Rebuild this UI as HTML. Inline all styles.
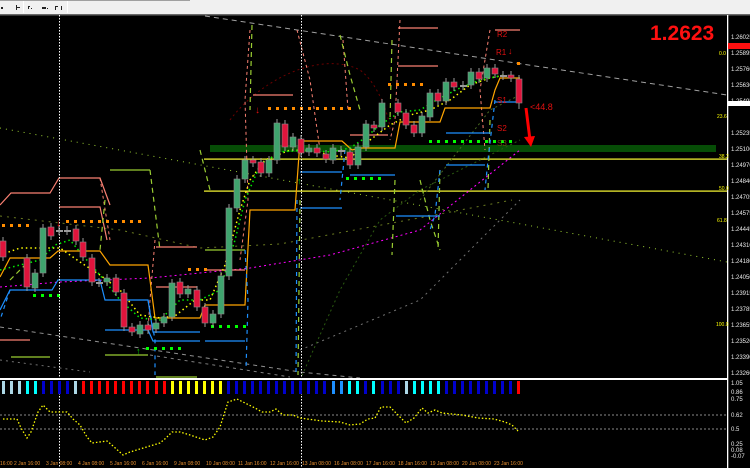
<!DOCTYPE html>
<html><head><meta charset="utf-8"><style>
html,body{margin:0;padding:0;background:#000;width:750px;height:468px;overflow:hidden}
svg{display:block}
text{font-family:"Liberation Sans",sans-serif}
</style></head><body>
<svg width="750" height="468" viewBox="0 0 750 468" xmlns="http://www.w3.org/2000/svg">
<rect x="0" y="0" width="750" height="468" fill="#000"/>
<!-- toolbar -->
<rect x="0" y="0" width="750" height="14" fill="#f0f0f0"/>
<rect x="0" y="0" width="190" height="1" fill="#a0a0a0"/>
<rect x="0" y="14" width="750" height="1.5" fill="#6a6a6a"/>
<rect x="23" y="1" width="1" height="12" fill="#fff"/>
<rect x="67" y="1" width="1" height="12" fill="#fff"/>
<g fill="#222"><rect x="1" y="7" width="2" height="2"/><rect x="16" y="5" width="1" height="5"/><rect x="16" y="7" width="4" height="1"/>
<rect x="28" y="6" width="1" height="3"/><rect x="28" y="6" width="2" height="1"/><rect x="31" y="8" width="1" height="1"/>
<rect x="42" y="7" width="4" height="2"/><rect x="47" y="8" width="1" height="1"/><rect x="55" y="6" width="1" height="4"/><rect x="55" y="6" width="3" height="1"/><rect x="61" y="6" width="1" height="4"/></g>

<!-- green band -->
<rect x="210" y="145" width="506" height="7" fill="#064d06"/>
<!-- yellow horizontals -->
<rect x="204" y="158.5" width="523" height="1.2" fill="#ffff33"/>
<rect x="204" y="190.5" width="523" height="1.2" fill="#ffff33"/>

<!-- trend lines -->
<g fill="none" stroke-width="1">
<path d="M205,16 L727,95" stroke="#a0a0a0" stroke-dasharray="5,4"/>
<path d="M0,327 L300,372 L360,378" stroke="#909090" stroke-dasharray="4,4"/>
<path d="M150,355 L290,377" stroke="#808080" stroke-dasharray="3,4"/>
<path d="M0,128 L727,262" stroke="#9acd32" stroke-dasharray="1,5"/>
<path d="M0,216 L120,230 L200,248 L280,244 L440,214 L512,200" stroke="#6a7a20" stroke-dasharray="2,5"/>
<path d="M0,287 L60,282 L150,278 L250,268 L330,255 L420,230 L520,150" stroke="#ff00ff" stroke-dasharray="2,3"/>
<path d="M0,360 L90,372 M300,350 L420,300 L520,200" stroke="#707070" stroke-dasharray="2,4"/>
<path d="M300,380 L340,290 L380,220 L420,190 L520,140" stroke="#2a5a10" stroke-dasharray="2,3"/>
<path d="M230,120 C260,80 320,50 360,70 C380,85 390,120 390,130" stroke="#6a0000" stroke-dasharray="2,3"/>
<path d="M420,200 L490,110 L520,95" stroke="#4a6a20" stroke-dasharray="2,3"/>
</g>

<!-- salmon pivot lines -->
<g stroke="#fa8072" stroke-width="1.2" fill="none">
<path d="M0,205 L11,193 L50,193 L59,178 L100,178 L110,205"/>
<path d="M59,207 L100,207 L107,240"/>
<path d="M156,247 L197,247"/>
<path d="M156,287 L197,287"/>
<path d="M205,270 L245,270"/>
<path d="M253,95 L293,95"/>
<path d="M398,28 L438,28"/>
<path d="M398,66 L438,66"/>
<path d="M350,135 L388,135"/>
<path d="M495,30 L520,30"/>
<path d="M0,340 L30,340"/>
</g>
<g stroke="#fa8072" stroke-width="1" fill="none" stroke-dasharray="3,3">
<path d="M250,30 L245,100 L248,200 L240,260"/>
<path d="M297,30 L310,80 L320,150"/>
<path d="M343,40 L348,110"/>
<path d="M400,20 L395,120 L390,140"/>
<path d="M490,30 L480,90 L485,150"/>
<path d="M155,240 L150,300 L148,330"/>
<path d="M100,178 L110,240"/>
</g>
<!-- lime dashed zigzags -->
<g stroke="#9acd32" stroke-width="1.2" fill="none" stroke-dasharray="5,4">
<path d="M252,25 L250,110"/>
<path d="M300,200 L298,375"/>
<path d="M340,35 L350,75 L360,110"/>
<path d="M392,40 L390,120"/>
<path d="M420,180 L430,220 L440,250"/>
<path d="M395,180 L392,255"/>
<path d="M440,170 L438,250"/>
<path d="M490,120 L488,190"/>
<path d="M105,200 L100,250"/>
<path d="M150,170 L160,250"/>
<path d="M10,280 L30,260 M200,150 L210,190"/>
</g>
<g stroke="#9acd32" stroke-width="1.2" fill="none">
<path d="M110,170 L150,170"/>
<path d="M11,357 L50,357 M105,355 L148,355 M156,377 L197,377"/>
<path d="M205,250 L245,250"/>
</g>

<!-- orange step line -->
<path d="M0,277 L10,258 L50,258 L58,251 L100,251 L110,265 L148,265 L155,318 L200,318 L205,305 L245,305 L250,210 L295,210 L300,141 L342,141 L352,150 L360,148 L395,148 L400,122 L440,122 L445,108 L490,108 L495,90 L500,78 L520,78" fill="none" stroke="#ffa500" stroke-width="1.2"/>
<!-- blue step lines -->
<g fill="none" stroke="#1e90ff" stroke-width="1.2">
<path d="M0,310 L10,290 L52,290 L58,280 L100,280 L105,300 L148,300 L153,332 L200,332"/>
<path d="M105,330 L148,330 L153,341 L200,341"/>
<path d="M300,172 L342,172"/>
<path d="M300,208 L342,208"/>
<path d="M350,175 L395,175"/>
<path d="M396,216 L440,216"/>
<path d="M446,133 L490,133"/>
<path d="M446,165 L485,165"/>
<path d="M495,102 L520,102"/>
<path d="M205,341 L245,341"/>
</g>
<g fill="none" stroke="#1e90ff" stroke-width="1.2" stroke-dasharray="4,4">
<path d="M148,300 L155,340 L155,375"/>
<path d="M245,250 L248,300 L246,370"/>
<path d="M297,200 L296,375"/>
<path d="M345,150 L340,200"/>
<path d="M440,170 L435,215 L430,230"/>
<path d="M495,100 L488,160 L485,190"/>
<path d="M10,290 L0,320"/>
</g>

<!-- yellow and green dotted MAs -->
<path d="M0,255 L20,248 L40,248 L60,248 L80,262 L100,275 L120,290 L140,315 L160,318 L175,316 L195,300 L210,300 L225,265 L240,210 L250,180 L265,160 L290,150 L315,151 L330,155 L350,158 L370,140 L390,125 L410,115 L430,110 L450,100 L470,85 L490,78 L505,75" fill="none" stroke="#ffff00" stroke-width="1.5" stroke-dasharray="1.5,3"/>
<path d="M0,270 L20,265 L40,260 L55,245 L70,240 L85,258 L100,275 L120,300 L140,318 L160,320 L180,300 L200,300 L220,290 L235,240 L245,200 L260,165 L280,152 L305,150 L330,152 L350,148 L365,138 L380,125 L400,112 L420,110 L440,98 L460,88 L480,80 L505,75" fill="none" stroke="#00ee00" stroke-width="1.5" stroke-dasharray="1.5,3"/>

<!-- dot rows -->
<g fill="#ff8c00">
<rect x="2" y="224" width="3" height="3"/><rect x="10" y="224" width="3" height="3"/><rect x="18" y="224" width="3" height="3"/><rect x="26" y="224" width="3" height="3"/>
<rect x="66" y="220" width="3" height="3"/><rect x="74" y="220" width="3" height="3"/><rect x="82" y="220" width="3" height="3"/><rect x="90" y="220" width="3" height="3"/><rect x="98" y="220" width="3" height="3"/><rect x="106" y="220" width="3" height="3"/><rect x="114" y="220" width="3" height="3"/><rect x="122" y="220" width="3" height="3"/><rect x="130" y="220" width="3" height="3"/><rect x="138" y="220" width="3" height="3"/>
<rect x="188" y="268" width="3" height="3"/><rect x="196" y="268" width="3" height="3"/><rect x="204" y="268" width="3" height="3"/>
<rect x="268" y="107" width="3" height="3"/><rect x="276" y="107" width="3" height="3"/><rect x="284" y="107" width="3" height="3"/><rect x="292" y="107" width="3" height="3"/><rect x="300" y="107" width="3" height="3"/><rect x="308" y="107" width="3" height="3"/><rect x="316" y="107" width="3" height="3"/><rect x="324" y="107" width="3" height="3"/><rect x="332" y="107" width="3" height="3"/><rect x="340" y="107" width="3" height="3"/><rect x="348" y="107" width="3" height="3"/>
<rect x="388" y="83" width="3" height="3"/><rect x="396" y="83" width="3" height="3"/><rect x="404" y="83" width="3" height="3"/><rect x="412" y="83" width="3" height="3"/><rect x="420" y="83" width="3" height="3"/>
<rect x="517" y="62" width="3" height="3"/>
</g>
<g fill="#00ff00">
<rect x="33" y="294" width="3" height="3"/><rect x="41" y="294" width="3" height="3"/><rect x="49" y="294" width="3" height="3"/><rect x="57" y="294" width="3" height="3"/>
<rect x="146" y="347" width="3" height="3"/><rect x="154" y="347" width="3" height="3"/><rect x="162" y="347" width="3" height="3"/><rect x="170" y="347" width="3" height="3"/><rect x="178" y="347" width="3" height="3"/>
<rect x="211" y="325" width="3" height="3"/><rect x="219" y="325" width="3" height="3"/><rect x="227" y="325" width="3" height="3"/><rect x="235" y="325" width="3" height="3"/><rect x="243" y="325" width="3" height="3"/>
<rect x="346" y="177" width="3" height="3"/><rect x="354" y="177" width="3" height="3"/><rect x="362" y="177" width="3" height="3"/><rect x="370" y="177" width="3" height="3"/><rect x="378" y="177" width="3" height="3"/>
<rect x="429" y="140" width="3" height="3"/><rect x="437" y="140" width="3" height="3"/><rect x="445" y="140" width="3" height="3"/><rect x="453" y="140" width="3" height="3"/><rect x="461" y="140" width="3" height="3"/><rect x="469" y="140" width="3" height="3"/><rect x="477" y="140" width="3" height="3"/><rect x="485" y="140" width="3" height="3"/><rect x="493" y="140" width="3" height="3"/><rect x="501" y="140" width="3" height="3"/><rect x="509" y="140" width="3" height="3"/>
</g>

<!-- vertical dotted separators -->
<path d="M59.5,15 L59.5,468" stroke="#fff" stroke-width="1" stroke-dasharray="1.5,1.5"/>
<path d="M301.5,15 L301.5,468" stroke="#fff" stroke-width="1" stroke-dasharray="1.5,1.5"/>

<!-- candles -->
<g stroke="#9a9a9a" stroke-width="1">
<path d="M3,237V261M27,254V291M35,269V292M43,224V277M51,223V240M59,226V235M67,226V235M76,225V245M83,238V261M92,254V286M99,278V287M107,274V286M116,274V296M124,289V331M132,323V336M140,321V338M148,321V334M156,319V333M164,313V327M172,279V321M180,278V298M188,285V298M197,286V311M205,303V327M213,310V327M221,272V318M229,204V280M237,175V212M245,156V183M253,156V167M261,158V177M269,156V177M277,119V164M285,120V151M293,133V151M301,135V157M309,144V156M317,144V157M326,150V163M333,144V164M341,146V156M350,148V169M358,143V169M366,120V151M374,121V132M382,99V131M398,99V116M406,109V129M414,121V137M422,112V137M430,89V121M438,89V105M446,78V105M454,78V91M463,81V90M471,68V89M479,68V83M487,64V82M495,64V78M503,71V80M511,71V82M519,75V109"/>
</g>
<g fill="#e0143c" stroke="#8a8a8a" stroke-width="0.6">
<rect x="0" y="241" width="6" height="16"/><rect x="24" y="258" width="6" height="29"/><rect x="48" y="227" width="6" height="9"/><rect x="73" y="229" width="6" height="12"/><rect x="80" y="242" width="6" height="15"/><rect x="89" y="258" width="6" height="24"/><rect x="113" y="278" width="6" height="14"/><rect x="121" y="293" width="6" height="34"/><rect x="129" y="327" width="6" height="5"/><rect x="145" y="325" width="6" height="5"/><rect x="177" y="282" width="6" height="12"/><rect x="194" y="290" width="6" height="17"/><rect x="202" y="307" width="6" height="16"/><rect x="250" y="160" width="6" height="3"/><rect x="258" y="162" width="6" height="11"/><rect x="282" y="124" width="6" height="23"/><rect x="298" y="139" width="6" height="14"/><rect x="314" y="148" width="6" height="5"/><rect x="323" y="154" width="6" height="5"/><rect x="347" y="152" width="6" height="13"/><rect x="371" y="125" width="6" height="3"/><rect x="395" y="103" width="6" height="9"/><rect x="403" y="113" width="6" height="12"/><rect x="411" y="125" width="6" height="8"/><rect x="435" y="93" width="6" height="8"/><rect x="451" y="82" width="6" height="5"/><rect x="476" y="72" width="6" height="7"/><rect x="492" y="68" width="6" height="6"/><rect x="508" y="75" width="6" height="3"/><rect x="516" y="79" width="6" height="24"/>
</g>
<g fill="#3fa46e" stroke="#8a8a8a" stroke-width="0.6">
<rect x="32" y="273" width="6" height="15"/><rect x="40" y="228" width="6" height="45"/><rect x="104" y="278" width="6" height="4"/><rect x="137" y="325" width="6" height="9"/><rect x="153" y="323" width="6" height="6"/><rect x="161" y="317" width="6" height="6"/><rect x="169" y="283" width="6" height="34"/><rect x="185" y="289" width="6" height="5"/><rect x="210" y="314" width="6" height="9"/><rect x="218" y="276" width="6" height="38"/><rect x="226" y="208" width="6" height="68"/><rect x="234" y="179" width="6" height="29"/><rect x="242" y="160" width="6" height="19"/><rect x="266" y="160" width="6" height="13"/><rect x="274" y="123" width="6" height="37"/><rect x="290" y="137" width="6" height="10"/><rect x="306" y="148" width="6" height="4"/><rect x="330" y="148" width="6" height="12"/><rect x="355" y="147" width="6" height="18"/><rect x="363" y="124" width="6" height="23"/><rect x="379" y="103" width="6" height="24"/><rect x="419" y="116" width="6" height="17"/><rect x="427" y="93" width="6" height="24"/><rect x="443" y="82" width="6" height="19"/><rect x="468" y="72" width="6" height="13"/><rect x="484" y="68" width="6" height="10"/>
</g>
<g fill="#9a9a9a"><rect x="56" y="230" width="7" height="2"/><rect x="64" y="230" width="7" height="2"/><rect x="96" y="282" width="7" height="2"/><rect x="338" y="150" width="7" height="2"/><rect x="460" y="85" width="7" height="2"/><rect x="500" y="75" width="7" height="2"/></g>

<!-- labels on chart -->
<g fill="#e01010" font-size="8">
<text x="497" y="37">R2</text><text x="496" y="55">R1</text><text x="497" y="103">S1</text><text x="497" y="131">S2</text><text x="497" y="146" fill="#6a4a10">S3</text>
<text x="530" y="110" font-size="9">&lt;44.8</text>
</g>
<text x="508" y="54" fill="#e01010" font-size="9" font-weight="bold">&#x2193;</text>
<text x="255" y="113" fill="#e01010" font-size="10" font-weight="bold">&#x2193;</text>
<text x="56" y="226" fill="#e01010" font-size="10" font-weight="bold">&#x2193;</text>
<text x="136" y="354" fill="#00dd00" font-size="9" font-weight="bold">&#x2191;</text>
<text x="297" y="184" fill="#00dd00" font-size="9" font-weight="bold">&#x2191;</text>
<!-- red arrow -->
<path d="M526,108 L530,140" stroke="#ff0000" stroke-width="3"/>
<path d="M524,137 L531,147 L535,136 Z" fill="#ff0000"/>

<!-- big price -->
<text x="650" y="40" fill="#ff1010" font-size="21" font-weight="bold">1.2623</text>

<!-- right axis -->
<rect x="727" y="15" width="1.3" height="453" fill="#fff"/>
<g fill="#e8e8e8" font-size="6">
<text x="731" y="39">1.26025</text><text x="731" y="55">1.25895</text><text x="731" y="71">1.25760</text><text x="731" y="87">1.25630</text><text x="731" y="103">1.25495</text><text x="731" y="135">1.25235</text><text x="731" y="151">1.25100</text><text x="731" y="167">1.24970</text><text x="731" y="183">1.24840</text><text x="731" y="199">1.24705</text><text x="731" y="215">1.24575</text><text x="731" y="231">1.24445</text><text x="731" y="247">1.24310</text><text x="731" y="263">1.24180</text><text x="731" y="279">1.24050</text><text x="731" y="295">1.23915</text><text x="731" y="311">1.23785</text><text x="731" y="327">1.23655</text><text x="731" y="343">1.23520</text><text x="731" y="359">1.23390</text><text x="731" y="375">1.23260</text>
<text x="731" y="385">1.05</text><text x="731" y="394">0.86</text><text x="731" y="401">0.75</text><text x="731" y="417">0.62</text><text x="731" y="431">0.5</text><text x="731" y="446">0.25</text><text x="731" y="452">0.08</text><text x="731" y="458">-0.07</text>
</g>
<rect x="728" y="43" width="22" height="6" fill="#ff1010"/>
<rect x="728" y="101" width="22" height="5" fill="#fff"/>
<g fill="#ffff00" font-size="5"><text x="719" y="55">0.0</text><text x="717" y="118">23.6</text><text x="719" y="158">38.2</text><text x="719" y="190">50.0</text><text x="717" y="222">61.8</text><text x="716" y="326">100.0</text></g>

<!-- separator -->
<rect x="0" y="378" width="727" height="2" fill="#fff"/>

<!-- color bars -->
<g>
<rect x="2" y="381" width="3" height="13" fill="#add8e6"/><rect x="10" y="381" width="3" height="13" fill="#add8e6"/><rect x="18" y="381" width="3" height="13" fill="#add8e6"/><rect x="26" y="381" width="3" height="13" fill="#00ffff"/><rect x="34" y="381" width="3" height="13" fill="#00ffff"/><rect x="42" y="381" width="3" height="13" fill="#0000cd"/><rect x="50" y="381" width="3" height="13" fill="#0000cd"/><rect x="58" y="381" width="3" height="13" fill="#0000cd"/><rect x="66" y="381" width="3" height="13" fill="#0000cd"/><rect x="74" y="381" width="3" height="13" fill="#add8e6"/>
<rect x="82" y="381" width="3" height="13" fill="#f00"/><rect x="90" y="381" width="3" height="13" fill="#f00"/><rect x="98" y="381" width="3" height="13" fill="#f00"/><rect x="106" y="381" width="3" height="13" fill="#f00"/><rect x="114" y="381" width="3" height="13" fill="#f00"/><rect x="122" y="381" width="3" height="13" fill="#f00"/><rect x="130" y="381" width="3" height="13" fill="#f00"/><rect x="138" y="381" width="3" height="13" fill="#f00"/><rect x="146" y="381" width="3" height="13" fill="#f00"/><rect x="155" y="381" width="3" height="13" fill="#f00"/><rect x="163" y="381" width="3" height="13" fill="#f00"/>
<rect x="171" y="381" width="3" height="13" fill="#ff0"/><rect x="179" y="381" width="3" height="13" fill="#ff0"/><rect x="187" y="381" width="3" height="13" fill="#ff0"/><rect x="195" y="381" width="3" height="13" fill="#ff0"/><rect x="203" y="381" width="3" height="13" fill="#ff0"/><rect x="211" y="381" width="3" height="13" fill="#ff0"/><rect x="219" y="381" width="3" height="13" fill="#ff0"/>
<rect x="227" y="381" width="3" height="13" fill="#0000cd"/><rect x="235" y="381" width="3" height="13" fill="#0000cd"/><rect x="243" y="381" width="3" height="13" fill="#0000cd"/><rect x="251" y="381" width="3" height="13" fill="#0000cd"/><rect x="259" y="381" width="3" height="13" fill="#0000cd"/><rect x="267" y="381" width="3" height="13" fill="#0000cd"/><rect x="275" y="381" width="3" height="13" fill="#0000cd"/><rect x="283" y="381" width="3" height="13" fill="#0000cd"/><rect x="291" y="381" width="3" height="13" fill="#0000cd"/><rect x="299" y="381" width="3" height="13" fill="#0000cd"/><rect x="307" y="381" width="3" height="13" fill="#0000cd"/><rect x="315" y="381" width="3" height="13" fill="#0000cd"/><rect x="323" y="381" width="3" height="13" fill="#0000cd"/>
<rect x="332" y="381" width="3" height="13" fill="#1e90ff"/><rect x="340" y="381" width="3" height="13" fill="#1e90ff"/><rect x="348" y="381" width="3" height="13" fill="#00ffff"/><rect x="356" y="381" width="3" height="13" fill="#00ffff"/><rect x="364" y="381" width="3" height="13" fill="#0000cd"/><rect x="372" y="381" width="3" height="13" fill="#00ffff"/>
<rect x="381" y="381" width="3" height="13" fill="#0000cd"/><rect x="389" y="381" width="3" height="13" fill="#0000cd"/><rect x="397" y="381" width="3" height="13" fill="#0000cd"/><rect x="405" y="381" width="3" height="13" fill="#add8e6"/><rect x="413" y="381" width="3" height="13" fill="#00ffff"/><rect x="421" y="381" width="3" height="13" fill="#00ffff"/><rect x="429" y="381" width="3" height="13" fill="#00ffff"/><rect x="437" y="381" width="3" height="13" fill="#00ffff"/>
<rect x="445" y="381" width="3" height="13" fill="#0000cd"/><rect x="453" y="381" width="3" height="13" fill="#0000cd"/><rect x="461" y="381" width="3" height="13" fill="#0000cd"/><rect x="469" y="381" width="3" height="13" fill="#0000cd"/><rect x="477" y="381" width="3" height="13" fill="#0000cd"/><rect x="485" y="381" width="3" height="13" fill="#0000cd"/><rect x="493" y="381" width="3" height="13" fill="#0000cd"/><rect x="501" y="381" width="3" height="13" fill="#0000cd"/><rect x="509" y="381" width="3" height="13" fill="#0000cd"/><rect x="517" y="381" width="3" height="13" fill="#f00"/>
</g>

<!-- oscillator -->
<path d="M0,415 L727,415 M0,429 L727,429" stroke="#8a8a8a" stroke-width="1" stroke-dasharray="2,2"/>
<path d="M3,419 L17,419 L21,428 L27,438 L31,432 L38,412 L43,405 L50,412 L67,412 L73,419 L80,425 L87,437 L92,443 L107,441 L113,446 L123,455 L130,452 L150,446 L160,443 L166,438 L172,432 L180,432 L190,435 L205,440 L213,437 L220,427 L228,402 L237,399 L255,408 L262,412 L270,412 L276,409 L283,415 L293,415 L300,418 L322,421 L340,422 L350,425 L360,424 L368,419 L375,418 L381,407 L390,407 L398,415 L406,423 L414,418 L422,408 L428,413 L435,410 L442,413 L462,415 L478,418 L494,419 L505,422 L512,425 L518,431" fill="none" stroke="#ffff00" stroke-width="1.3" stroke-dasharray="1.5,2"/>

<!-- time axis -->
<g fill="#e89030" font-size="5">
<text x="0" y="465">16:00</text><text x="14" y="465">2 Jan 16:00</text><text x="46" y="465">3 Jan 08:00</text><text x="78" y="465">4 Jan 08:00</text><text x="110" y="465">5 Jan 16:00</text><text x="142" y="465">6 Jan 16:00</text><text x="174" y="465">9 Jan 08:00</text><text x="206" y="465">10 Jan 08:00</text><text x="238" y="465">11 Jan 16:00</text><text x="270" y="465">12 Jan 16:00</text><text x="302" y="465">13 Jan 08:00</text><text x="334" y="465">16 Jan 08:00</text><text x="366" y="465">17 Jan 16:00</text><text x="398" y="465">18 Jan 16:00</text><text x="430" y="465">19 Jan 08:00</text><text x="462" y="465">20 Jan 08:00</text><text x="494" y="465">23 Jan 16:00</text>
</g>
</svg>
</body></html>
